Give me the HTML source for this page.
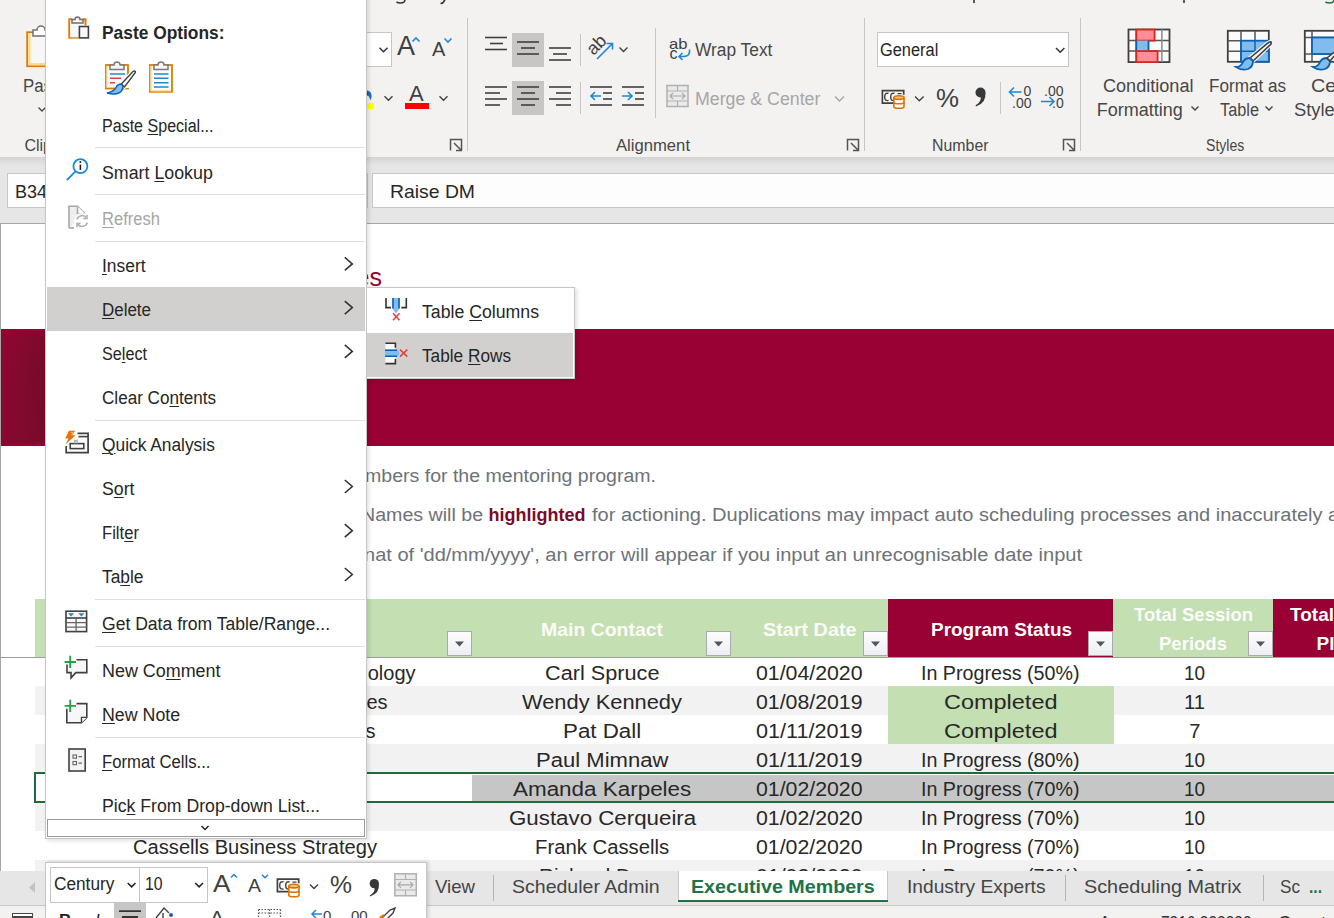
<!DOCTYPE html>
<html><head><meta charset="utf-8"><style>*{margin:0;padding:0;box-sizing:border-box}
html,body{width:1334px;height:918px;overflow:hidden;background:#fff;font-family:"Liberation Sans",sans-serif;color:#262626;position:relative}
.a{position:absolute}
.t{position:absolute;white-space:nowrap;transform-origin:0 0}
u{text-decoration:underline;text-underline-offset:2px;text-decoration-thickness:1px}
svg{position:absolute;overflow:visible}
</style></head><body>
<div class="a" style="left:0px;top:0px;width:1334px;height:157px;background:#f3f2f1"></div>
<svg style="left:0;top:0" width="1334" height="10"><path d="M405 -2v1.5q0 3.5-4.5 3.5q-2.5 0-4-1" fill="none" stroke="#333" stroke-width="1.6"/><path d="M446 -2l-2.5 4q-1 1.5-3 1.5" fill="none" stroke="#333" stroke-width="1.6"/><path d="M974 -2v5M1184 -2v5" stroke="#333" stroke-width="1.6"/><path d="M1334 -2v1.5q0 3.5-4.5 3.5q-2.5 0-4-1" fill="none" stroke="#217346" stroke-width="1.6"/></svg>
<svg style="left:0;top:0" width="46" height="157"><rect x="27.2" y="32.2" width="22" height="34" fill="#f7f7f7" stroke="#e07b00" stroke-width="1.8"/><path d="M28.2 33.2h2.5v29.8h19v2.3h-21.5z" fill="#fbdc90"/><path d="M33 36v-6h4a4 4 0 0 1 8 0h4v6z" fill="#fff" stroke="#707070" stroke-width="1.5"/><path d="M38.5 107.5l3.5 3.5 3.5-3.5" fill="none" stroke="#444" stroke-width="1.3"/></svg>
<div class="t" style="left:22.60px;top:77.06px;font-size:18px;line-height:18px;color:#474747;transform:scaleX(0.9342);">Paste</div>
<div class="t" style="left:24.40px;top:137.86px;font-size:16px;line-height:16px;color:#474747;">Clip</div>
<div class="a" style="left:340px;top:32px;width:52px;height:35px;background:#fff;border:1px solid #c6c6c6"></div>
<div class="t" style="left:397.00px;top:32.94px;font-size:27px;line-height:27px;color:#404040;font-weight:normal;">A</div>
<div class="t" style="left:432.00px;top:38.87px;font-size:20px;line-height:20px;color:#404040;">A</div>
<div class="t" style="left:409.00px;top:82.98px;font-size:22px;line-height:22px;color:#404040;">A</div>
<div class="t" style="left:669.00px;top:35.90px;font-size:15px;line-height:15px;color:#404040;transform:scaleX(1.1088);">ab</div>
<div class="t" style="left:669.50px;top:45.76px;font-size:16px;line-height:16px;color:#404040;">c</div>
<div class="t" style="left:694.60px;top:41.36px;font-size:18px;line-height:18px;color:#474747;transform:scaleX(0.9631);">Wrap Text</div>
<div class="t" style="left:694.60px;top:89.76px;font-size:18px;line-height:18px;color:#a6a6a6;transform:scaleX(0.9870);">Merge &amp; Center</div>
<div class="t" style="left:616.00px;top:138.06px;font-size:16px;line-height:16px;color:#474747;transform:scaleX(1.0401);">Alignment</div>
<div class="a" style="left:877px;top:32px;width:192px;height:35px;background:#fff;border:1px solid #c6c6c6"></div>
<div class="t" style="left:880.00px;top:41.46px;font-size:18px;line-height:18px;color:#262626;transform:scaleX(0.9104);">General</div>
<div class="t" style="left:936.00px;top:84.99px;font-size:26px;line-height:26px;color:#404040;transform:scaleX(0.9949);">%</div>
<div class="t" style="left:1023.50px;top:84.45px;font-size:14px;line-height:14px;color:#404040;">0</div>
<div class="t" style="left:1012.00px;top:95.65px;font-size:14px;line-height:14px;color:#404040;">.00</div>
<div class="t" style="left:1044.00px;top:84.45px;font-size:14px;line-height:14px;color:#404040;">.00</div>
<div class="t" style="left:1052.00px;top:95.65px;font-size:14px;line-height:14px;color:#404040;">.0</div>
<div class="t" style="left:931.70px;top:137.76px;font-size:16px;line-height:16px;color:#474747;transform:scaleX(0.9946);">Number</div>
<div class="t" style="left:1103.25px;top:76.76px;font-size:18px;line-height:18px;color:#474747;transform:scaleX(1.0049);">Conditional</div>
<div class="t" style="left:1096.80px;top:100.66px;font-size:18px;line-height:18px;color:#474747;">Formatting</div>
<div class="t" style="left:1209.00px;top:76.76px;font-size:18px;line-height:18px;color:#474747;transform:scaleX(0.9504);">Format as</div>
<div class="t" style="left:1220.00px;top:100.66px;font-size:18px;line-height:18px;color:#474747;transform:scaleX(0.9063);">Table</div>
<div class="t" style="left:1311.00px;top:76.76px;font-size:18px;line-height:18px;color:#474747;transform:scaleX(1.0966);">Cell</div>
<div class="t" style="left:1294.00px;top:100.66px;font-size:18px;line-height:18px;color:#474747;transform:scaleX(1.0201);">Styles</div>
<div class="t" style="left:1205.85px;top:137.66px;font-size:16px;line-height:16px;color:#474747;transform:scaleX(0.8790);">Styles</div>
<svg style="left:0;top:0" width="1334" height="157"><path d="M379.5 47.8l4 4 4-4" fill="none" stroke="#333" stroke-width="1.5" /><path d="M412.5 41.5l3.5-3.5 3.5 3.5" fill="none" stroke="#1e88d6" stroke-width="1.6" /><path d="M444.5 38.5l3.5 3.5 3.5-3.5" fill="none" stroke="#1e88d6" stroke-width="1.6" /><rect x="366" y="103" width="8" height="6" fill="#ffff00"/><path d="M366.8 90.3q4.6 0.8 4.8 5.8q0 2.4-1.2 4.2q-0.8-3.4-3.6-6.6z" fill="#1a6cc0"/><path d="M367 92.5v3.3" stroke="#333" stroke-width="1.5"/><path d="M384.5 96.3l4 4 4-4" fill="none" stroke="#404040" stroke-width="1.4" /><rect x="405" y="103" width="24" height="6" fill="#ff0000"/><path d="M439.5 96.3l4 4 4-4" fill="none" stroke="#404040" stroke-width="1.4" /><path d="M450.5 150.5v-11h11v6" fill="none" stroke="#555" stroke-width="1.5" /><path d="M454 143l7.5 7.5M461.5 145v5.5h-5.5" fill="none" stroke="#555" stroke-width="1.5" /><rect x="467" y="18" width="1" height="133" fill="#c8c6c4"/><rect x="512" y="33" width="32" height="34" fill="#c8c6c4"/><rect x="512" y="81" width="32" height="34" fill="#c8c6c4"/><rect x="485" y="36.7" width="22" height="1.6" fill="#404040"/><rect x="490" y="42.7" width="13" height="1.6" fill="#404040"/><rect x="485" y="48.7" width="22" height="1.6" fill="#404040"/><rect x="517" y="41.2" width="22" height="1.6" fill="#404040"/><rect x="521" y="47.2" width="14" height="1.6" fill="#404040"/><rect x="517" y="53.2" width="22" height="1.6" fill="#404040"/><rect x="549" y="47.2" width="22" height="1.6" fill="#404040"/><rect x="553" y="53.2" width="14" height="1.6" fill="#404040"/><rect x="549" y="59.2" width="22" height="1.6" fill="#404040"/><rect x="580" y="34" width="1" height="32" fill="#c8c6c4"/><text x="0" y="0" transform="translate(593.5,56) rotate(-45)" font-family="Liberation Sans" font-size="18" fill="#404040">ab</text><path d="M597 59l15-15M606.5 43.5h6v6" fill="none" stroke="#1e88d6" stroke-width="1.6" /><path d="M619.5 47.5l4 4 4-4" fill="none" stroke="#404040" stroke-width="1.4" /><rect x="655" y="28" width="1" height="90" fill="#c8c6c4"/><rect x="485" y="86.2" width="22" height="1.6" fill="#404040"/><rect x="485" y="92.2" width="15" height="1.6" fill="#404040"/><rect x="485" y="98.2" width="22" height="1.6" fill="#404040"/><rect x="485" y="104.2" width="15" height="1.6" fill="#404040"/><rect x="517" y="86.2" width="22" height="1.6" fill="#404040"/><rect x="521" y="92.2" width="14" height="1.6" fill="#404040"/><rect x="517" y="98.2" width="22" height="1.6" fill="#404040"/><rect x="521" y="104.2" width="14" height="1.6" fill="#404040"/><rect x="549" y="86.2" width="22" height="1.6" fill="#404040"/><rect x="556" y="92.2" width="15" height="1.6" fill="#404040"/><rect x="549" y="98.2" width="22" height="1.6" fill="#404040"/><rect x="556" y="104.2" width="15" height="1.6" fill="#404040"/><rect x="580" y="82" width="1" height="32" fill="#c8c6c4"/><rect x="590" y="86.2" width="22" height="1.6" fill="#404040"/><rect x="603" y="92.2" width="9" height="1.6" fill="#404040"/><rect x="603" y="98.2" width="9" height="1.6" fill="#404040"/><rect x="590" y="104.2" width="22" height="1.6" fill="#404040"/><path d="M591 96h10M595 92l-4 4 4 4" fill="none" stroke="#1e88d6" stroke-width="1.6" /><rect x="622" y="86.2" width="22" height="1.6" fill="#404040"/><rect x="635" y="92.2" width="9" height="1.6" fill="#404040"/><rect x="635" y="98.2" width="9" height="1.6" fill="#404040"/><rect x="622" y="104.2" width="22" height="1.6" fill="#404040"/><path d="M622 96h10M628 92l4 4-4 4" fill="none" stroke="#1e88d6" stroke-width="1.6" /><path d="M689.5 49.5q1 7-6 7h-4.5M682.5 53l-3.5 3.5 3.5 3.5" fill="none" stroke="#1e88d6" stroke-width="1.6" /><rect x="667" y="85.5" width="21" height="21" fill="#eaeaea" stroke="#b0b0b0" stroke-width="1.5"/><path d="M667 91h21M667 101h21M677.5 85.5v5.5M677.5 101v5.5" fill="none" stroke="#b0b0b0" stroke-width="1.2" /><path d="M670 96h15M673 93l-3 3 3 3M682 93l3 3-3 3" fill="none" stroke="#a8a8a8" stroke-width="1.2" /><path d="M835 96.5l4.5 4.5 4.5-4.5" fill="none" stroke="#a6a6a6" stroke-width="1.4" /><path d="M847.5 150.5v-11h11v6" fill="none" stroke="#555" stroke-width="1.5" /><path d="M851 143l7.5 7.5M858.5 145v5.5h-5.5" fill="none" stroke="#555" stroke-width="1.5" /><rect x="864" y="18" width="1" height="133" fill="#c8c6c4"/><path d="M1056 48l4.2 4.2 4.2-4.2" fill="none" stroke="#333" stroke-width="1.5" /><path d="M893 103.2H882.4V90.6h21.3v4.2" fill="#fafafa" stroke="#404040" stroke-width="1.7"/>
<path d="M888.5 93.3q-3.8-0.8-3.8 3.6q0 4.4 3.8 3.6M894.5 93.3q-3.8-0.8-3.8 3.6q0 4.4 3.8 3.6M897.5 93.6h4" fill="none" stroke="#404040" stroke-width="1.4"/>
<path d="M893.8 97.6v8.8q0 1.8 5.1 1.8t5.1-1.8v-8.8" fill="#fff" stroke="#e07000" stroke-width="1.6"/>
<ellipse cx="898.9" cy="97.6" rx="5.1" ry="1.8" fill="#f6c66a" stroke="#e07000" stroke-width="1.6"/>
<path d="M893.8 102q0 1.8 5.1 1.8t5.1-1.8" fill="none" stroke="#e07000" stroke-width="1.6"/><path d="M915 96.5l4.3 4.3 4.3-4.3" fill="none" stroke="#404040" stroke-width="1.4" /><g transform="translate(0,0)"><circle cx="980.5" cy="92.5" r="5" fill="#383838"/><path d="M985.4 92.5Q986.5 103 976 106.5L975.6 105.3Q981.5 101.5 980.8 97.2z" fill="#383838"/></g><rect x="1000" y="82" width="1" height="32" fill="#c8c6c4"/><path d="M1009.5 92h12M1014 87.5l-4.5 4.5 4.5 4.5" fill="none" stroke="#1e88d6" stroke-width="1.6" /><path d="M1041 101.5h13M1049.5 97l4.5 4.5-4.5 4.5" fill="none" stroke="#1e88d6" stroke-width="1.6" /><path d="M1063.5 150.5v-11h11v6" fill="none" stroke="#555" stroke-width="1.5" /><path d="M1067 143l7.5 7.5M1074.5 145v5.5h-5.5" fill="none" stroke="#555" stroke-width="1.5" /><rect x="1080" y="18" width="1" height="133" fill="#c8c6c4"/><g transform="translate(1126,27)">
<rect x="2.5" y="2.5" width="41" height="32.6" fill="#fafafa" stroke="#404040" stroke-width="1.8"/>
<path d="M2.5 13.5h41M2.5 24.1h41M10.3 2.5v32.6" stroke="#555" stroke-width="1.5"/>
<path d="M35.9 2.5v32.6" stroke="#8a8a8a" stroke-width="1.5"/>
<rect x="10.3" y="2.6" width="18.3" height="11" fill="#ff8f96" stroke="#d9261c" stroke-width="1.8"/>
<rect x="10.3" y="13.6" width="12.2" height="10.5" fill="#82bcec"/>
<path d="M10.3 13.6v10.5M22.5 13.6v10.5" stroke="#0b62b5" stroke-width="1.8"/>
<rect x="10.3" y="24.1" width="21.3" height="11" fill="#ff8f96" stroke="#d9261c" stroke-width="1.8"/>
</g><g transform="translate(1227,30)">
<rect x="0.8" y="0.8" width="41" height="31" fill="#fafafa" stroke="#404040" stroke-width="1.8"/>
<path d="M14 0.8v31M28 0.8v31M0.8 10.7h41M0.8 21.2h41" stroke="#555" stroke-width="1.5"/>
<rect x="14" y="10.7" width="27.8" height="21" fill="#82bcec" stroke="#0b62b5" stroke-width="1.8"/>
<path d="M28 10.7v21M14 21.2h27.8" stroke="#0b62b5" stroke-width="1.5"/>
<path d="M41 13 q4 -3 3 1 L26 31 l-3 -3z" fill="#f7f7f7" stroke="#f3f2f1" stroke-width="4"/>
<path d="M41 13 q4 -3 3 1 L26 31 l-3 -3z" fill="#f7f7f7" stroke="#404040" stroke-width="1.6"/>
<path d="M23 28q-5 0 -7 4q-2 5 -7 5q6 4 12 2q5 -2 5 -8z" fill="#82bcec" stroke="#0b62b5" stroke-width="1.8"/>
</g><g transform="translate(1304,30)">
<rect x="0.8" y="0.8" width="40" height="31" fill="#fafafa" stroke="#404040" stroke-width="1.8"/>
<path d="M8 0.8v31M0.8 7.5h40M0.8 24h40" stroke="#555" stroke-width="1.5"/>
<rect x="8" y="7.5" width="32" height="16.5" fill="#82bcec" stroke="#0b62b5" stroke-width="1.8"/>
<path d="M23 28q-5 0 -7 4q-2 5 -7 5q6 4 12 2q5 -2 5 -8z" fill="#82bcec" stroke="#0b62b5" stroke-width="1.8"/>
<path d="M41 13 L26 31 l-3 -3z" fill="#f7f7f7" stroke="#404040" stroke-width="1.6"/>
</g><path d="M1191.5 106.5l3.5 3.5 3.5-3.5" fill="none" stroke="#404040" stroke-width="1.4" /><path d="M1265.5 106.5l3.5 3.5 3.5-3.5" fill="none" stroke="#404040" stroke-width="1.4" /></svg>
<div class="a" style="left:0;top:0;width:1334px;height:871px;overflow:hidden"><div class="a" style="left:0px;top:223px;width:1334px;height:648px;background:#fff"></div>
<div class="a" style="left:0px;top:223px;width:1334px;height:1px;background:#a6a6a6"></div>
<div class="a" style="left:0px;top:223px;width:1px;height:648px;background:#a6a6a6"></div>
<div class="t" style="left:355.60px;top:264.84px;font-size:25px;line-height:25px;color:#99002e;">es</div>
<div class="a" style="left:0px;top:329px;width:1334px;height:117px;background:#990033"></div>
<div class="a" style="left:1px;top:331px;width:45px;height:112px;background:linear-gradient(90deg,#8c0632 0%,#800a2e 50%,#720b28 100%)"></div>
<div class="a" style="left:1px;top:331px;width:45px;height:112px;background:linear-gradient(180deg,rgba(150,5,50,0.35) 0%,rgba(0,0,0,0) 40%,rgba(130,10,45,0.2) 100%)"></div>
<div class="a" style="left:0px;top:329px;width:1px;height:117px;background:#a6a6a6"></div>
<div class="t" style="left:365.00px;top:467.46px;font-size:18px;line-height:18px;color:#6d7278;transform:scaleX(1.0854);">mbers for the mentoring program.</div>
<div class="t" style="left:361.00px;top:506.46px;font-size:18px;line-height:18px;color:#6d7278;transform:scaleX(1.0894);">Names will be </div>
<div class="t" style="left:488.50px;top:506.46px;font-size:18px;line-height:18px;color:#7a0a2b;font-weight:bold;">highlighted</div>
<div class="t" style="left:592.00px;top:506.46px;font-size:18px;line-height:18px;color:#6d7278;transform:scaleX(1.1113);">for actioning. Duplications may impact auto scheduling processes and inaccurately</div>
<div class="t" style="left:1328.00px;top:506.46px;font-size:18px;line-height:18px;color:#6d7278;transform:scaleX(1.0988);">a</div>
<div class="t" style="left:364.00px;top:546.46px;font-size:18px;line-height:18px;color:#6d7278;transform:scaleX(1.1128);">nat of &#39;dd/mm/yyyy&#39;, an error will appear if you input an unrecognisable date input</div>
<div class="a" style="left:35px;top:599px;width:853px;height:58px;background:#c4dfb2"></div>
<div class="a" style="left:888px;top:599px;width:225px;height:58px;background:#990033"></div>
<div class="a" style="left:1113px;top:599px;width:160px;height:58px;background:#c4dfb2"></div>
<div class="a" style="left:1273px;top:599px;width:61px;height:58px;background:#990033"></div>
<div class="a" style="left:0px;top:657px;width:1334px;height:1px;background:#9e9e9e"></div>
<div class="t" style="left:540.80px;top:619.92px;font-size:19px;line-height:19px;color:#fbfdf9;font-weight:bold;transform:scaleX(1.0228);">Main Contact</div>
<div class="t" style="left:762.95px;top:619.92px;font-size:19px;line-height:19px;color:#fbfdf9;font-weight:bold;transform:scaleX(1.0418);">Start Date</div>
<div class="t" style="left:930.50px;top:619.92px;font-size:19px;line-height:19px;color:#ffffff;font-weight:bold;transform:scaleX(0.9966);">Program Status</div>
<div class="t" style="left:1133.50px;top:605.42px;font-size:19px;line-height:19px;color:#fbfdf9;font-weight:bold;transform:scaleX(0.9745);">Total Session</div>
<div class="t" style="left:1159.00px;top:633.92px;font-size:19px;line-height:19px;color:#fbfdf9;font-weight:bold;transform:scaleX(0.9757);">Periods</div>
<div class="t" style="left:1290.00px;top:605.42px;font-size:19px;line-height:19px;color:#fff;font-weight:bold;">Total</div>
<div class="t" style="left:1316.50px;top:633.92px;font-size:19px;line-height:19px;color:#fff;font-weight:bold;">Pl</div>
<div class="a" style="left:447px;top:631px;width:25px;height:25px;background:linear-gradient(#fdfdfd,#eceef2);border:1px solid #a7abb0"></div>
<svg style="left:447px;top:631px" width="25" height="25"><path d="M8 10.5h9l-4.5 5z" fill="#555"/></svg>
<div class="a" style="left:706px;top:631px;width:25px;height:25px;background:linear-gradient(#fdfdfd,#eceef2);border:1px solid #a7abb0"></div>
<svg style="left:706px;top:631px" width="25" height="25"><path d="M8 10.5h9l-4.5 5z" fill="#555"/></svg>
<div class="a" style="left:863px;top:631px;width:25px;height:25px;background:linear-gradient(#fdfdfd,#eceef2);border:1px solid #a7abb0"></div>
<svg style="left:863px;top:631px" width="25" height="25"><path d="M8 10.5h9l-4.5 5z" fill="#555"/></svg>
<div class="a" style="left:1088px;top:631px;width:25px;height:25px;background:linear-gradient(#fdfdfd,#eceef2);border:1px solid #a7abb0"></div>
<svg style="left:1088px;top:631px" width="25" height="25"><path d="M8 10.5h9l-4.5 5z" fill="#555"/></svg>
<div class="a" style="left:1248px;top:631px;width:25px;height:25px;background:linear-gradient(#fdfdfd,#eceef2);border:1px solid #a7abb0"></div>
<svg style="left:1248px;top:631px" width="25" height="25"><path d="M8 10.5h9l-4.5 5z" fill="#555"/></svg>
<div class="a" style="left:35px;top:686px;width:1299px;height:29px;background:#f2f2f2"></div>
<div class="a" style="left:888px;top:686px;width:226px;height:29px;background:#c4dfb2"></div>
<div class="a" style="left:888px;top:715px;width:226px;height:29px;background:#c4dfb2"></div>
<div class="a" style="left:35px;top:744px;width:1299px;height:29px;background:#f2f2f2"></div>
<div class="a" style="left:472px;top:775px;width:862px;height:26px;background:#c6c6c6"></div>
<div class="a" style="left:35px;top:802px;width:1299px;height:29px;background:#f2f2f2"></div>
<div class="a" style="left:35px;top:860px;width:1299px;height:29px;background:#f2f2f2"></div>
<div class="a" style="left:0px;top:657px;width:1334px;height:1px;background:#9e9e9e"></div>
<div class="t" style="left:367.69px;top:663.37px;font-size:20px;line-height:20px;color:#282828;">ology</div>
<div class="t" style="left:544.95px;top:663.37px;font-size:20px;line-height:20px;color:#282828;transform:scaleX(1.0843);">Carl Spruce</div>
<div class="t" style="left:756.15px;top:663.37px;font-size:20px;line-height:20px;color:#282828;transform:scaleX(1.0639);">01/04/2020</div>
<div class="t" style="left:921.05px;top:663.37px;font-size:20px;line-height:20px;color:#282828;transform:scaleX(0.9834);">In Progress (50%)</div>
<div class="t" style="left:1184.30px;top:663.37px;font-size:20px;line-height:20px;color:#282828;transform:scaleX(0.9440);">10</div>
<div class="t" style="left:366.38px;top:692.37px;font-size:20px;line-height:20px;color:#282828;">es</div>
<div class="t" style="left:522.25px;top:692.37px;font-size:20px;line-height:20px;color:#282828;transform:scaleX(1.0922);">Wendy Kennedy</div>
<div class="t" style="left:756.15px;top:692.37px;font-size:20px;line-height:20px;color:#282828;transform:scaleX(1.0639);">01/08/2019</div>
<div class="t" style="left:944.15px;top:692.37px;font-size:20px;line-height:20px;color:#282828;transform:scaleX(1.1735);">Completed</div>
<div class="t" style="left:1184.30px;top:692.37px;font-size:20px;line-height:20px;color:#282828;transform:scaleX(1.0114);">11</div>
<div class="t" style="left:365.50px;top:721.37px;font-size:20px;line-height:20px;color:#282828;">s</div>
<div class="t" style="left:563.15px;top:721.37px;font-size:20px;line-height:20px;color:#282828;transform:scaleX(1.1152);">Pat Dall</div>
<div class="t" style="left:756.15px;top:721.37px;font-size:20px;line-height:20px;color:#282828;transform:scaleX(1.0800);">01/11/2019</div>
<div class="t" style="left:944.15px;top:721.37px;font-size:20px;line-height:20px;color:#282828;transform:scaleX(1.1735);">Completed</div>
<div class="t" style="left:1189.24px;top:721.37px;font-size:20px;line-height:20px;color:#282828;">7</div>
<div class="t" style="left:536.00px;top:750.37px;font-size:20px;line-height:20px;color:#282828;transform:scaleX(1.1029);">Paul Mimnaw</div>
<div class="t" style="left:756.15px;top:750.37px;font-size:20px;line-height:20px;color:#282828;transform:scaleX(1.0800);">01/11/2019</div>
<div class="t" style="left:921.05px;top:750.37px;font-size:20px;line-height:20px;color:#282828;transform:scaleX(0.9834);">In Progress (80%)</div>
<div class="t" style="left:1184.30px;top:750.37px;font-size:20px;line-height:20px;color:#282828;transform:scaleX(0.9440);">10</div>
<div class="t" style="left:513.05px;top:779.37px;font-size:20px;line-height:20px;color:#282828;transform:scaleX(1.1214);">Amanda Karpeles</div>
<div class="t" style="left:756.15px;top:779.37px;font-size:20px;line-height:20px;color:#282828;transform:scaleX(1.0639);">01/02/2020</div>
<div class="t" style="left:921.05px;top:779.37px;font-size:20px;line-height:20px;color:#282828;transform:scaleX(0.9834);">In Progress (70%)</div>
<div class="t" style="left:1184.30px;top:779.37px;font-size:20px;line-height:20px;color:#282828;transform:scaleX(0.9440);">10</div>
<div class="t" style="left:508.60px;top:808.37px;font-size:20px;line-height:20px;color:#282828;transform:scaleX(1.1152);">Gustavo Cerqueira</div>
<div class="t" style="left:756.15px;top:808.37px;font-size:20px;line-height:20px;color:#282828;transform:scaleX(1.0639);">01/02/2020</div>
<div class="t" style="left:921.05px;top:808.37px;font-size:20px;line-height:20px;color:#282828;transform:scaleX(0.9834);">In Progress (70%)</div>
<div class="t" style="left:1184.30px;top:808.37px;font-size:20px;line-height:20px;color:#282828;transform:scaleX(0.9440);">10</div>
<div class="t" style="left:132.60px;top:837.37px;font-size:20px;line-height:20px;color:#282828;transform:scaleX(1.0069);">Cassells Business Strategy</div>
<div class="t" style="left:535.10px;top:837.37px;font-size:20px;line-height:20px;color:#282828;transform:scaleX(1.0147);">Frank Cassells</div>
<div class="t" style="left:756.15px;top:837.37px;font-size:20px;line-height:20px;color:#282828;transform:scaleX(1.0639);">01/02/2020</div>
<div class="t" style="left:921.05px;top:837.37px;font-size:20px;line-height:20px;color:#282828;transform:scaleX(0.9834);">In Progress (70%)</div>
<div class="t" style="left:1184.30px;top:837.37px;font-size:20px;line-height:20px;color:#282828;transform:scaleX(0.9440);">10</div>
<div class="t" style="left:132.60px;top:866.37px;font-size:20px;line-height:20px;color:#282828;transform:scaleX(1.2933);">Richard D</div>
<div class="t" style="left:538.95px;top:866.37px;font-size:20px;line-height:20px;color:#282828;transform:scaleX(1.0344);">Richard Dean</div>
<div class="t" style="left:756.15px;top:866.37px;font-size:20px;line-height:20px;color:#282828;transform:scaleX(1.0639);">01/02/2020</div>
<div class="t" style="left:921.05px;top:866.37px;font-size:20px;line-height:20px;color:#282828;transform:scaleX(0.9834);">In Progress (70%)</div>
<div class="t" style="left:1184.30px;top:866.37px;font-size:20px;line-height:20px;color:#282828;transform:scaleX(0.9440);">10</div>
<div class="a" style="left:35px;top:772px;width:1299px;height:2px;background:#1e6b3e"></div>
<div class="a" style="left:35px;top:801px;width:1299px;height:2px;background:#1e6b3e"></div>
<div class="a" style="left:34px;top:772px;width:2px;height:31px;background:#1e6b3e"></div>
<div class="a" style="left:0px;top:871px;width:1334px;height:1px;background:#a6a6a6"></div>
</div><div class="a" style="left:0px;top:157px;width:1334px;height:66px;background:#e6e6e6"></div>
<div class="a" style="left:0px;top:157px;width:1334px;height:9px;background:linear-gradient(#d4d4d4,#e6e6e6)"></div>
<div class="a" style="left:7px;top:173px;width:80px;height:35px;background:#fdfdfd;border:1px solid #c6c6c6"></div>
<div class="t" style="left:15.00px;top:182.76px;font-size:18px;line-height:18px;color:#262626;">B34</div>
<div class="a" style="left:372px;top:173px;width:980px;height:35px;background:#fdfdfd;border:1px solid #c6c6c6"></div>
<div class="t" style="left:389.50px;top:181.92px;font-size:19px;line-height:19px;color:#262626;transform:scaleX(1.0191);">Raise DM</div>
<div class="a" style="left:367px;top:173px;width:1px;height:35px;background:#c0c0c0"></div>
<div class="a" style="left:0px;top:871px;width:1334px;height:34px;background:#e6e6e6"></div>
<div class="a" style="left:0px;top:905px;width:1334px;height:1px;background:#c8c8c8"></div>
<div class="a" style="left:0px;top:906px;width:1334px;height:12px;background:#f3f2f1"></div>
<svg style="left:0;top:871px" width="60" height="34"><path d="M35 11v11l-6-5.5z" fill="#c2c2c2"/></svg>
<div class="t" style="left:434.70px;top:876.92px;font-size:19px;line-height:19px;color:#444;transform:scaleX(0.9794);">View</div>
<div class="a" style="left:493px;top:875px;width:1px;height:26px;background:#b4b4b4"></div>
<div class="t" style="left:511.70px;top:876.92px;font-size:19px;line-height:19px;color:#444;transform:scaleX(1.0275);">Scheduler Admin</div>
<div class="a" style="left:678px;top:871px;width:210px;height:31px;background:#fff;border-left:1px solid #c8c8c8;border-right:1px solid #c8c8c8"></div>
<div class="a" style="left:678px;top:900px;width:210px;height:2px;background:#217346"></div>
<div class="t" style="left:691.30px;top:876.52px;font-size:19px;line-height:19px;color:#217346;font-weight:bold;transform:scaleX(1.0354);">Executive Members</div>
<div class="t" style="left:906.50px;top:876.92px;font-size:19px;line-height:19px;color:#444;transform:scaleX(1.0089);">Industry Experts</div>
<div class="a" style="left:1065px;top:875px;width:1px;height:26px;background:#b4b4b4"></div>
<div class="t" style="left:1084.00px;top:876.92px;font-size:19px;line-height:19px;color:#444;transform:scaleX(1.0429);">Scheduling Matrix</div>
<div class="a" style="left:1263px;top:875px;width:1px;height:26px;background:#b4b4b4"></div>
<div class="t" style="left:1280.00px;top:876.92px;font-size:19px;line-height:19px;color:#444;transform:scaleX(0.9020);">Sc</div>
<div class="t" style="left:1309.00px;top:876.92px;font-size:19px;line-height:19px;color:#217346;font-weight:bold;transform:scaleX(0.8210);">...</div>
<div class="t" style="left:1099.00px;top:913.76px;font-size:18px;line-height:18px;color:#333;transform:scaleX(0.9760);">Average:</div>
<div class="t" style="left:1161.00px;top:913.76px;font-size:18px;line-height:18px;color:#333;transform:scaleX(0.8610);">7316.333333</div>
<div class="t" style="left:1278.00px;top:913.76px;font-size:18px;line-height:18px;color:#333;">Count: 3</div>
<div class="a" style="left:11.5px;top:913px;width:21px;height:6px;border:1.6px solid #444;border-bottom:none;background:#fff"></div>
<div class="a" style="left:12px;top:916.2px;width:20px;height:1.6px;background:#444"></div>
<div class="a" style="left:13px;top:917.8px;width:18px;height:1px;background:#aaa"></div>
<div class="a" style="left:45px;top:-5px;width:322px;height:844px;background:#fff;border:1px solid #c6c6c6;box-shadow:2px 2px 4px rgba(0,0,0,0.12)"></div>
<div class="a" style="left:47px;top:287px;width:318px;height:44px;background:#d2d0ce"></div>
<div class="t" style="left:101.60px;top:24.16px;font-size:18px;line-height:18px;color:#262626;font-weight:bold;transform:scaleX(0.9644);">Paste Options:</div>
<div class="t" style="left:101.60px;top:116.56px;font-size:18px;line-height:18px;color:#262626;transform:scaleX(0.8915);">Paste <u>S</u>pecial...</div>
<div class="t" style="left:101.60px;top:163.56px;font-size:18px;line-height:18px;color:#262626;transform:scaleX(0.9887);">Smart <u>L</u>ookup</div>
<div class="t" style="left:101.60px;top:209.96px;font-size:18px;line-height:18px;color:#a6a6a6;transform:scaleX(0.9202);"><u>R</u>efresh</div>
<div class="t" style="left:101.60px;top:256.96px;font-size:18px;line-height:18px;color:#262626;transform:scaleX(0.9663);"><u>I</u>nsert</div>
<div class="t" style="left:101.60px;top:301.16px;font-size:18px;line-height:18px;color:#262626;transform:scaleX(0.9417);"><u>D</u>elete</div>
<div class="t" style="left:101.60px;top:345.16px;font-size:18px;line-height:18px;color:#262626;transform:scaleX(0.8995);">Se<u>l</u>ect</div>
<div class="t" style="left:101.60px;top:389.16px;font-size:18px;line-height:18px;color:#262626;transform:scaleX(0.9495);">Clear Co<u>n</u>tents</div>
<div class="t" style="left:101.60px;top:436.16px;font-size:18px;line-height:18px;color:#262626;transform:scaleX(0.9637);"><u>Q</u>uick Analysis</div>
<div class="t" style="left:101.60px;top:480.16px;font-size:18px;line-height:18px;color:#262626;transform:scaleX(0.9845);">S<u>o</u>rt</div>
<div class="t" style="left:101.60px;top:524.16px;font-size:18px;line-height:18px;color:#262626;transform:scaleX(0.9250);">Filt<u>e</u>r</div>
<div class="t" style="left:101.60px;top:568.16px;font-size:18px;line-height:18px;color:#262626;transform:scaleX(0.9644);">Ta<u>b</u>le</div>
<div class="t" style="left:101.60px;top:615.46px;font-size:18px;line-height:18px;color:#262626;transform:scaleX(0.9752);"><u>G</u>et Data from Table/Range...</div>
<div class="t" style="left:101.60px;top:662.26px;font-size:18px;line-height:18px;color:#262626;transform:scaleX(0.9955);">New Co<u>m</u>ment</div>
<div class="t" style="left:101.60px;top:706.06px;font-size:18px;line-height:18px;color:#262626;transform:scaleX(0.9895);"><u>N</u>ew Note</div>
<div class="t" style="left:101.60px;top:753.16px;font-size:18px;line-height:18px;color:#262626;transform:scaleX(0.9272);"><u>F</u>ormat Cells...</div>
<div class="t" style="left:101.60px;top:797.16px;font-size:18px;line-height:18px;color:#262626;transform:scaleX(0.9817);">Pic<u>k</u> From Drop-down List...</div>
<div class="a" style="left:95px;top:147px;width:270px;height:1px;background:#e1dfdd"></div>
<div class="a" style="left:95px;top:194px;width:270px;height:1px;background:#e1dfdd"></div>
<div class="a" style="left:95px;top:241px;width:270px;height:1px;background:#e1dfdd"></div>
<div class="a" style="left:95px;top:420px;width:270px;height:1px;background:#e1dfdd"></div>
<div class="a" style="left:95px;top:599px;width:270px;height:1px;background:#e1dfdd"></div>
<div class="a" style="left:95px;top:646px;width:270px;height:1px;background:#e1dfdd"></div>
<div class="a" style="left:95px;top:737px;width:270px;height:1px;background:#e1dfdd"></div>
<div class="a" style="left:47px;top:819px;width:318px;height:18px;background:#fff;border:1px solid #9a9a9a"></div>
<svg style="left:0;top:0" width="1334" height="918"><path d="M344.8 257.4l7.5 6.5-7.5 6.5" fill="none" stroke="#333" stroke-width="1.6"/><path d="M344.8 301.1l7.5 6.5-7.5 6.5" fill="none" stroke="#333" stroke-width="1.6"/><path d="M344.8 344.9l7.5 6.5-7.5 6.5" fill="none" stroke="#333" stroke-width="1.6"/><path d="M344.8 480.0l7.5 6.5-7.5 6.5" fill="none" stroke="#333" stroke-width="1.6"/><path d="M344.8 524.2l7.5 6.5-7.5 6.5" fill="none" stroke="#333" stroke-width="1.6"/><path d="M344.8 568.0l7.5 6.5-7.5 6.5" fill="none" stroke="#333" stroke-width="1.6"/><path d="M201.5 826l3.5 3.5 3.5-3.5" fill="none" stroke="#222" stroke-width="1.5"/><path d="M69.3 38.6V19.3h3M82.5 19.3h3v6" fill="none" stroke="#e07b00" stroke-width="2"/>
<path d="M69.3 37.6h9" stroke="#e07b00" stroke-width="2"/>
<rect x="70.3" y="20.3" width="8" height="17" fill="#f7f7f7"/>
<path d="M72 23V19.5h3a2.5 2.5 0 0 1 5 0h3V23z" fill="#f7f7f7" stroke="#707070" stroke-width="1.5"/>
<rect x="79.4" y="26.5" width="9" height="11.4" fill="#f7f7f7" stroke="#404040" stroke-width="1.6"/><g>
<rect x="106" y="65" width="22" height="23.5" fill="#fbfbfb" stroke="#e07b00" stroke-width="1.8"/>
<path d="M107 66v21.5" stroke="#fbe0a0" stroke-width="1.5"/>
<path d="M110 69.5V65h4a3 3 0 0 1 6 0h4v4.5z" fill="#f7f7f7" stroke="#7a7a7a" stroke-width="1.5"/>
<path d="M110 74h15" stroke="#1e88d6" stroke-width="1.5"/>
<path d="M110 78.3h11M110 82.8h5" stroke="#e84040" stroke-width="1.5"/>
<path d="M126 75h5v13h-5z" fill="#fff"/>
<path d="M133.2 71.3q2.5 -1 2.2 1.2L124.5 87l-3.2 -3z" fill="#fafafa" stroke="#fff" stroke-width="3.5"/>
<path d="M133.2 71.3q2.5 -1 2.2 1.2L124.5 87l-3.2 -3z" fill="#fafafa" stroke="#404040" stroke-width="1.4"/>
<path d="M121.5 84q-4 0-5.5 3.5q-2 4-9 5.5q6 1.8 10.5 0.5q5.5-1.5 5.5-7.5z" fill="#82bcec" stroke="#0b62b5" stroke-width="1.5"/>
</g><g>
<rect x="150" y="65" width="22" height="26.8" fill="#fbfbfb" stroke="#e07b00" stroke-width="1.8"/>
<path d="M151 66v25M151 90.8h20" stroke="#fbe0a0" stroke-width="1.5"/>
<path d="M154 69.5V65h4a3 3 0 0 1 6 0h4v4.5z" fill="#f7f7f7" stroke="#7a7a7a" stroke-width="1.5"/>
<path d="M154 74h14.5M154 78.3h14.5M154 82.8h14.5M154 87h14.5" stroke="#1e88d6" stroke-width="1.5"/>
</g><circle cx="80.4" cy="166.2" r="7" fill="#fff" stroke="#1e88d6" stroke-width="1.8"/>
<path d="M75.4 171.3l-8.5 8.8" stroke="#1e88d6" stroke-width="1.8"/>
<path d="M80.4 164.5v5.5" stroke="#222" stroke-width="1.6"/><circle cx="80.4" cy="162" r="1" fill="#222"/><path d="M69 228V206.2h8.5l7.5 7.5" fill="#eee" stroke="#a8a8a8" stroke-width="1.6"/>
<path d="M77.5 206.2v7.5h7.5" fill="#fff" stroke="#a8a8a8" stroke-width="1.6"/>
<path d="M69 228h5" stroke="#a8a8a8" stroke-width="1.6"/>
<circle cx="82" cy="221" r="8" fill="#fff"/>
<path d="M76.8 219.5a5.5 5.5 0 0 1 9.8-1.5M87.4 222.5a5.5 5.5 0 0 1-9.8 1.5" fill="none" stroke="#b0b0b0" stroke-width="1.5"/>
<path d="M87 214.8v3.6h-3.6M77 227.2v-3.6h3.6" fill="none" stroke="#b0b0b0" stroke-width="1.5"/><path d="M77.5 433.4h10.6v19.2H66.2V446" fill="none" stroke="#404040" stroke-width="1.7"/>
<path d="M78.5 436.6h9.6" stroke="#404040" stroke-width="1.6"/>
<rect x="70.2" y="443.6" width="13.6" height="5" fill="#fff" stroke="#404040" stroke-width="1.6"/>
<path d="M74.6 443.5v-3h2.5v3" fill="none" stroke="#aaa" stroke-width="1.3"/>
<path d="M69 430.8h6.2l-2.9 4.5h3.3l-10.2 9.3 3.2-6h-3.4z" fill="#e8730c"/>
<path d="M70.8 432.5h2.4l-1.8 3" stroke="#f6c46a" stroke-width="0.8" fill="none"/><rect x="66" y="611.2" width="20.6" height="20.4" fill="#fafafa" stroke="#404040" stroke-width="1.6"/>
<path d="M66 618h20.6" stroke="#404040" stroke-width="1.6"/>
<path d="M66 622.7h20.6M66 627.2h20.6M76.1 618v13.6" stroke="#666" stroke-width="1.3"/>
<path d="M68 613.2h6.2l-3.1 3.2zM78.3 613.2h6.2l-3.1 3.2z" fill="#1e88d6"/><path d="M76.5 659.8h10.3v12.8h-11l-4.8 5.3v-5.3h-4v-8" fill="#f7f7f7" stroke="#404040" stroke-width="1.6"/>
<path d="M70.2 655.8v12.2M64.6 662h11.4" stroke="#24a148" stroke-width="1.9"/><path d="M76.5 703.6h10.3v13.8l-5.3 5.3H66.8v-14" fill="#f7f7f7" stroke="#404040" stroke-width="1.6"/>
<path d="M86.8 717.4h-5.3v5.3" fill="#fff" stroke="#404040" stroke-width="1.4"/>
<path d="M70.2 699.7v12.2M64.6 705.9h11.4" stroke="#24a148" stroke-width="1.9"/><rect x="69" y="749" width="16.2" height="22" fill="#f3f3f3" stroke="#404040" stroke-width="1.6"/>
<rect x="73" y="755" width="3.5" height="3.2" fill="none" stroke="#666" stroke-width="1.1"/>
<rect x="73" y="761.5" width="3.5" height="3.2" fill="none" stroke="#666" stroke-width="1.1"/>
<path d="M78.5 756.6h3.5M78.5 763.1h3.5" stroke="#666" stroke-width="1.1"/></svg>
<div class="a" style="left:366px;top:287px;width:209px;height:92px;background:#fff;border:1px solid #c6c6c6;box-shadow:2px 2px 4px rgba(0,0,0,0.12)"></div>
<div class="a" style="left:367px;top:333px;width:206px;height:44px;background:#d2d0ce"></div>
<div class="t" style="left:422.00px;top:302.76px;font-size:18px;line-height:18px;color:#262626;transform:scaleX(0.9827);">Table <u>C</u>olumns</div>
<div class="t" style="left:422.00px;top:346.76px;font-size:18px;line-height:18px;color:#262626;transform:scaleX(0.9566);">Table <u>R</u>ows</div>
<svg style="left:0;top:0" width="1334" height="918"><rect x="386" y="298.5" width="20" height="9" fill="#fafafa"/>
<path d="M386 298v9.6h5M406.3 298v9.6h-5" fill="none" stroke="#333" stroke-width="1.6"/>
<path d="M392.3 298h7.3v10.2l-3.65 5.2-3.65-5.2z" fill="#82bcec"/>
<path d="M393 298v10.5M399 298v10.5" stroke="#0b62b5" stroke-width="1.6"/>
<path d="M393 313.3l6.5 7M399.5 313.3l-6.5 7" stroke="#e84040" stroke-width="1.6"/>
<rect x="385.4" y="343" width="10" height="21" fill="#fafafa"/>
<path d="M385.4 343.2h10v4.5M385.4 363.6h10v-4.5" fill="none" stroke="#333" stroke-width="1.6"/>
<path d="M385 349.5h12.3l2.5 3.8-2.5 3.8H385z" fill="#82bcec"/>
<path d="M385 350.3h12M385 356.2h12" stroke="#0b62b5" stroke-width="1.6"/>
<path d="M400 349.7l7.3 7M407.3 349.7l-7.3 7" stroke="#e84040" stroke-width="1.6"/></svg>
<div class="a" style="left:45px;top:862px;width:382px;height:60px;background:#fff;border:1px solid #c6c6c6;box-shadow:2px -1px 3px rgba(0,0,0,0.12)"></div>
<div class="a" style="left:50px;top:867px;width:90px;height:36px;background:#fff;border:1px solid #c6c6c6"></div>
<div class="a" style="left:139px;top:867px;width:69px;height:36px;background:#fff;border:1px solid #c6c6c6"></div>
<div class="t" style="left:53.50px;top:875.46px;font-size:18px;line-height:18px;color:#262626;transform:scaleX(0.9567);">Century</div>
<div class="t" style="left:144.60px;top:875.46px;font-size:18px;line-height:18px;color:#262626;transform:scaleX(0.8790);">10</div>
<div class="a" style="left:114px;top:903px;width:32px;height:16px;background:#c8c6c4"></div>
<div class="t" style="left:212.50px;top:871.68px;font-size:24px;line-height:24px;color:#404040;transform:scaleX(1.0932);">A</div>
<div class="t" style="left:248.00px;top:876.76px;font-size:18px;line-height:18px;color:#404040;transform:scaleX(1.0828);">A</div>
<div class="t" style="left:330.00px;top:873.53px;font-size:23px;line-height:23px;color:#404040;transform:scaleX(1.0758);">%</div>
<div class="t" style="left:59.00px;top:911.61px;font-size:17px;line-height:17px;color:#222;font-weight:bold;">B</div>
<div class="t" style="left:95.00px;top:911.61px;font-size:17px;line-height:17px;color:#222;font-style:italic;">I</div>
<div class="t" style="left:209.50px;top:908.76px;font-size:18px;line-height:18px;color:#404040;transform:scaleX(1.1661);">A</div>
<div class="t" style="left:323.00px;top:907.80px;font-size:15px;line-height:15px;color:#404040;">0</div>
<div class="t" style="left:351.00px;top:907.80px;font-size:15px;line-height:15px;color:#404040;">00</div>
<svg style="left:0;top:0" width="1334" height="918"><g transform="translate(374.3,883.6) scale(0.93) translate(-980.5,-92.5)"><circle cx="980.5" cy="92.5" r="5" fill="#383838"/><path d="M985.4 92.5Q986.5 103 976 106.5L975.6 105.3Q981.5 101.5 980.8 97.2z" fill="#383838"/></g><path d="M127.7 883l3.9 3.9 3.9-3.9M195.2 883l3.9 3.9 3.9-3.9" fill="none" stroke="#222" stroke-width="1.5"/><path d="M231 877.5l3-3 3 3" fill="none" stroke="#1e88d6" stroke-width="1.5"/><path d="M262 874.8l3 3 3-3" fill="none" stroke="#1e88d6" stroke-width="1.5"/><g transform="translate(-605,788.5)"><path d="M893 103.2H882.4V90.6h21.3v4.2" fill="#fafafa" stroke="#404040" stroke-width="1.7"/>
<path d="M888.5 93.3q-3.8-0.8-3.8 3.6q0 4.4 3.8 3.6M894.5 93.3q-3.8-0.8-3.8 3.6q0 4.4 3.8 3.6M897.5 93.6h4" fill="none" stroke="#404040" stroke-width="1.4"/>
<path d="M893.8 97.6v8.8q0 1.8 5.1 1.8t5.1-1.8v-8.8" fill="#fff" stroke="#e07000" stroke-width="1.6"/>
<ellipse cx="898.9" cy="97.6" rx="5.1" ry="1.8" fill="#f6c66a" stroke="#e07000" stroke-width="1.6"/>
<path d="M893.8 102q0 1.8 5.1 1.8t5.1-1.8" fill="none" stroke="#e07000" stroke-width="1.6"/></g>
<path d="M310 884.5l4 4 4-4" fill="none" stroke="#404040" stroke-width="1.4"/><rect x="394.8" y="873.8" width="21.5" height="22" fill="#eaeaea" stroke="#b0b0b0" stroke-width="1.5"/>
<path d="M394.8 879.5h21.5M394.8 890h21.5M405.5 873.8v5.7M405.5 890v5.8" stroke="#b0b0b0" stroke-width="1.2"/>
<path d="M398 884.8h15M401 881.8l-3 3 3 3M410 881.8l3 3-3 3" fill="none" stroke="#a8a8a8" stroke-width="1.2"/><path d="M119 911.2h22M122 917h16" stroke="#333" stroke-width="1.8"/><path d="M156 918l8-10 5 5M163 913v5" fill="none" stroke="#404040" stroke-width="1.4"/><circle cx="171" cy="915" r="2" fill="#1e5fa8"/><path d="M258.5 909.5h22M258.5 909.5v9M280.5 909.5v9M258.5 913h22M269.5 909.5v9" fill="none" stroke="#555" stroke-width="1.2" stroke-dasharray="1.5 1.5"/><path d="M312 914h10M316 910l-4 4 4 4" fill="none" stroke="#1e88d6" stroke-width="1.5"/><path d="M382 918l8-8 5-2-2 5-8 8" fill="#fff" stroke="#404040" stroke-width="1.4"/><path d="M380 918l4-3" stroke="#e07b00" stroke-width="2.5"/></svg>
</body></html>
